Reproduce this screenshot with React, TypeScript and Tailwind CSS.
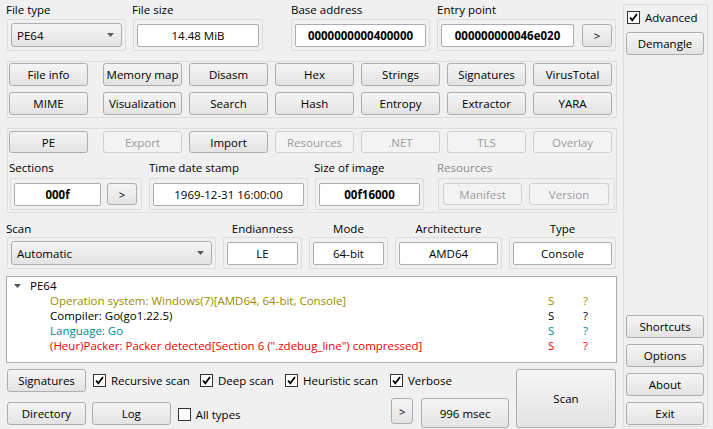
import clsx from "clsx"
import type { ReactNode } from "react"

// Detect It Easy main window

function Btn({
  children,
  className,
  disabled,
}: {
  children: ReactNode
  className?: string
  disabled?: boolean
}) {
  return (
    <div
      className={clsx(
        "flex items-center justify-center rounded-[3px] border whitespace-nowrap",
        disabled
          ? "border-[#cfcfcf] bg-[#f3f3f3] text-[#9c9c9c]"
          : "border-[#adadad] bg-linear-to-b from-[#f5f5f5] to-[#e3e3e3] text-black",
        className
      )}
    >
      {children}
    </div>
  )
}

function Field({ children, className, bold }: { children: ReactNode; className?: string; bold?: boolean }) {
  return (
    <div
      className={clsx(
        "flex h-[23px] items-center justify-center rounded-[2px] border border-[#abadb3] bg-white",
        bold && "font-bold",
        className
      )}
    >
      {children}
    </div>
  )
}

function Combo({ children, className }: { children: ReactNode; className?: string }) {
  return (
    <div
      className={clsx(
        "flex h-[24px] items-center justify-between rounded-[3px] border border-[#adadad] bg-linear-to-b from-[#f5f5f5] to-[#e3e3e3] pl-[5px] pr-[7px]",
        className
      )}
    >
      <span>{children}</span>
      <svg width="7" height="4" viewBox="0 0 7 4">
        <path d="M0 0h7L3.5 4z" fill="#5a5a5a" />
      </svg>
    </div>
  )
}

function Frame({ children, className }: { children: ReactNode; className?: string }) {
  return (
    <div className={clsx("flex h-[32px] items-center rounded-[2px] border border-[#dcdcdc] px-[3px]", className)}>
      {children}
    </div>
  )
}

function Check({ checked, label, className }: { checked?: boolean; label: string; className?: string }) {
  return (
    <div className={clsx("flex items-center", className)}>
      <div className="flex h-[13px] w-[13px] items-center justify-center border border-[#333] bg-white">
        {checked && (
          <svg width="9" height="9" viewBox="0 0 9 9">
            <path d="M1 4.5l2.3 2.7L8 1" fill="none" stroke="#000" strokeWidth="1.8" />
          </svg>
        )}
      </div>
      <span className="ml-[5px]">{label}</span>
    </div>
  )
}

// left margin of each of the 7 button columns
const colGap = ["ml-0", "ml-[15px]", "ml-[7px]", "ml-[7px]", "ml-[7px]", "ml-[7px]", "ml-[7px]"]

const tools = [
  ["File info", "Memory map", "Disasm", "Hex", "Strings", "Signatures", "VirusTotal"],
  ["MIME", "Visualization", "Search", "Hash", "Entropy", "Extractor", "YARA"],
]

const peTabs: [string, boolean][] = [
  ["PE", false],
  ["Export", true],
  ["Import", false],
  ["Resources", true],
  [".NET", true],
  ["TLS", true],
  ["Overlay", true],
]

const results = [
  { text: "Operation system: Windows(7)[AMD64, 64-bit, Console]", color: "text-[#9a8c00]" },
  { text: "Compiler: Go(go1.22.5)", color: "text-black" },
  { text: "Language: Go", color: "text-[#00898c]" },
  { text: '(Heur)Packer: Packer detected[Section 6 (".zdebug_line") compressed]', color: "text-[#f00000]" },
]

export default function App() {
  return (
    <div className="flex h-[429px] w-[713px] bg-[#f0f0f0] font-['Open_Sans',sans-serif] text-[11.5px] leading-[15px] text-black">
      {/* main column */}
      <div className="flex w-[617px] flex-col pl-[7px] pt-[2px]">
        {/* file type / size / addresses */}
        <div className="flex">
          <div className="flex w-[119px] flex-col">
            <div className="-ml-px h-[16px] leading-[16px]">File type</div>
            <Frame className="mt-px">
              <Combo className="w-full">PE64</Combo>
            </Frame>
          </div>
          <div className="ml-[7px] flex w-[130px] flex-col">
            <div className="-ml-px h-[16px] leading-[16px]">File size</div>
            <Frame className="mt-px">
              <Field className="w-full">14.48 MiB</Field>
            </Frame>
          </div>
          <div className="ml-[28px] flex w-[139px] flex-col">
            <div className="h-[16px] leading-[16px]">Base address</div>
            <Frame className="mt-px">
              <Field bold className="w-full">0000000000400000</Field>
            </Frame>
          </div>
          <div className="ml-[7px] flex w-[179px] flex-col">
            <div className="h-[16px] leading-[16px]">Entry point</div>
            <Frame className="mt-px">
              <Field bold className="w-[133px]">000000000046e020</Field>
              <Btn className="ml-[8px] h-[23px] w-[30px]">&gt;</Btn>
            </Frame>
          </div>
        </div>

        {/* tool buttons */}
        <div className="mt-[10px] flex w-[610px] flex-col gap-[6px] rounded-[2px] border border-[#dcdcdc] px-px pb-[2px] pt-px">
          {tools.map((row, i) => (
            <div key={i} className="flex">
              {row.map((t, j) => (
                <Btn key={t} className={clsx("h-[23px] w-[79px]", colGap[j])}>
                  {t}
                </Btn>
              ))}
            </div>
          ))}
        </div>

        {/* PE group */}
        <div className="mt-[10px] flex w-[610px] flex-col rounded-[2px] border border-[#dcdcdc] pb-[2px] pt-[2px]">
          <div className="flex pl-px">
            {peTabs.map(([t, d], j) => (
              <Btn key={t} disabled={d} className={clsx("h-[22px] w-[79px]", colGap[j])}>
                {t}
              </Btn>
            ))}
          </div>
          <div className="mt-[7px] flex pl-[2px]">
            <div className="flex w-[132px] flex-col">
              <div className="-ml-px h-[16px] leading-[16px]">Sections</div>
              <Frame className="mt-[2px]">
                <Field bold className="h-[22px] w-[87px]">000f</Field>
                <Btn className="ml-[6px] h-[22px] w-[30px]">&gt;</Btn>
              </Frame>
            </div>
            <div className="ml-[7px] flex w-[159px] flex-col">
              <div className="h-[16px] leading-[16px]">Time date stamp</div>
              <Frame className="mt-[2px]">
                <Field className="h-[22px] w-full">1969-12-31 16:00:00</Field>
              </Frame>
            </div>
            <div className="ml-[7px] flex w-[109px] flex-col">
              <div className="-ml-px h-[16px] leading-[16px]">Size of image</div>
              <Frame className="mt-[2px]">
                <Field bold className="h-[22px] w-full">00f16000</Field>
              </Frame>
            </div>
            <div className="ml-[14px] flex w-[177px] flex-col">
              <div className="-ml-px h-[16px] leading-[16px] text-[#8c8c8c]">Resources</div>
              <Frame className="mt-[2px] gap-[7px] pl-[4px]">
                <Btn disabled className="h-[22px] w-[79px]">Manifest</Btn>
                <Btn disabled className="h-[22px] w-[80px]">Version</Btn>
              </Frame>
            </div>
          </div>
        </div>

        {/* scan options */}
        <div className="mt-[8px] flex">
          <div className="flex w-[209px] flex-col">
            <div className="-ml-px h-[16px] leading-[16px]">Scan</div>
            <Frame>
              <Combo className="w-full">Automatic</Combo>
            </Frame>
          </div>
          {[
            ["Endianness", "LE", "w-[79px]"],
            ["Mode", "64-bit", "w-[79px]"],
            ["Architecture", "AMD64", "w-[107px]"],
            ["Type", "Console", "w-[107px]"],
          ].map(([l, v, w]) => (
            <div key={l} className={clsx("ml-[7px] flex flex-col", w)}>
              <div className="h-[16px] text-center leading-[16px]">{l}</div>
              <Frame>
                <Field className="w-full">{v}</Field>
              </Frame>
            </div>
          ))}
        </div>

        {/* result tree */}
        <div className="-ml-px mt-[7px] flex h-[87px] w-[611px] flex-col border border-[#acacac] bg-white pt-px">
          <div className="flex h-[15px] items-center">
            <svg width="7" height="4" viewBox="0 0 7 4" className="ml-[7px]">
              <path d="M0 0h7L3.5 4z" fill="#555" />
            </svg>
            <span className="ml-[9px]">PE64</span>
          </div>
          {results.map((r) => (
            <div key={r.text} className={clsx("flex h-[15px] items-center whitespace-nowrap", r.color)}>
              <span className="ml-[43px] w-[498px]">{r.text}</span>
              <span className="w-[35px]">S</span>
              <span>?</span>
            </div>
          ))}
        </div>

        {/* bottom controls */}
        <div className="mt-[6px] flex">
          <div className="flex w-[502px] flex-col">
            <div className="flex h-[23px] items-center">
              <Btn className="h-[23px] w-[79px]">Signatures</Btn>
              <Check checked label="Recursive scan" className="ml-[7px] w-[107px]" />
              <Check checked label="Deep scan" className="w-[85px]" />
              <Check checked label="Heuristic scan" className="w-[105px]" />
              <Check checked label="Verbose" />
            </div>
            <div className="mt-[6px] flex h-[30px] items-start">
              <Btn className="mt-[4px] h-[23px] w-[79px]">Directory</Btn>
              <Btn className="ml-[6px] mt-[4px] h-[23px] w-[79px]">Log</Btn>
              <Check label="All types" className="ml-[7px] mt-[9px] w-[214px]" />
              <Btn className="h-[26px] w-[22px]">&gt;</Btn>
              <Btn className="ml-[8px] h-[30px] w-[88px]">996 msec</Btn>
            </div>
          </div>
          <Btn className="ml-[7px] h-[59px] w-[100px]">Scan</Btn>
        </div>
      </div>

      {/* right panel */}
      <div className="ml-[6px] mt-[4px] flex h-[423px] w-[85px] flex-col justify-between rounded-[2px] border border-[#dcdcdc] px-[2px] pb-[1px] pt-[5px]">
        <div className="flex flex-col">
          <Check checked label="Advanced" className="ml-px" />
          <Btn className="mt-[7px] h-[23px] w-[78px]">Demangle</Btn>
        </div>
        <div className="flex flex-col gap-[6px]">
          {["Shortcuts", "Options", "About", "Exit"].map((t) => (
            <Btn key={t} className="h-[23px] w-[78px]">
              {t}
            </Btn>
          ))}
        </div>
      </div>
    </div>
  )
}
